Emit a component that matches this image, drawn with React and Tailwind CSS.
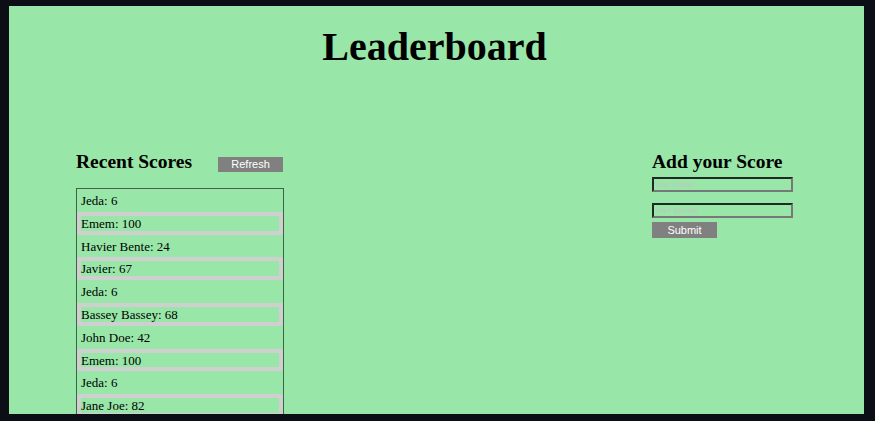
import React from "react";

const scores = [
  { name: "Jeda", score: 6 },
  { name: "Emem", score: 100 },
  { name: "Havier Bente", score: 24 },
  { name: "Javier", score: 67 },
  { name: "Jeda", score: 6 },
  { name: "Bassey Bassey", score: 68 },
  { name: "John Doe", score: 42 },
  { name: "Emem", score: 100 },
  { name: "Jeda", score: 6 },
  { name: "Jane Joe", score: 82 },
];

const serif = "font-['Liberation_Serif','Times_New_Roman',serif]";
const sans = "font-['Liberation_Sans',Arial,sans-serif]";

const App = () => {
  return (
    <div className="min-h-screen bg-[#0b0e14] pt-[6px] pl-[9px]">
      <div className={`w-[855px] h-[408px] overflow-hidden bg-[#98e6a8] text-black ${serif}`}>
        <h1 className="pt-[18px] pr-[4px] text-center text-[40px] leading-[46px] font-bold">Leaderboard</h1>

        <div className="mt-[80px] flex pl-[67px] pr-[71px]">
          <div className="w-[208px]">
            <div className="flex items-start">
              <h2 className="pt-[1px] text-[19.5px] leading-[22px] font-bold">Recent Scores</h2>
              <button className={`ml-[26px] mt-[7px] h-[15px] w-[65px] bg-[#808080] text-[11px] leading-[15px] text-white ${sans}`}>
                Refresh
              </button>
            </div>
            <ul className="mt-[15px] border border-[#3f6347]">
              {scores.map((s, i) => (
                <li
                  key={i}
                  className={`h-[22.8px] border-[4px] text-[13px] leading-[16.5px] ${i % 2 === 1 ? "border-[#cfcfcf]" : "border-transparent"}`}
                >
                  {s.name}: {s.score}
                </li>
              ))}
            </ul>
          </div>

          <div className="ml-auto w-[141px]">
            <h2 className="pt-[1px] text-[19.5px] leading-[22px] font-bold">Add your Score</h2>
            <form className="flex flex-col items-start" onSubmit={(e) => e.preventDefault()}>
              <input
                placeholder="Your Name"
                className={`mt-[4px] h-[15px] w-[141px] border-2 border-t-[#1f2b22] border-l-[#1f2b22] border-r-[#787878] border-b-[#787878] bg-transparent px-[1px] text-[8px] outline-none placeholder:text-[#c4c4c4] ${sans}`}
              />
              <input
                placeholder="Your Scores"
                className={`mt-[11px] h-[15px] w-[141px] border-2 border-t-[#1f2b22] border-l-[#1f2b22] border-r-[#787878] border-b-[#787878] bg-transparent px-[1px] text-[8px] outline-none placeholder:text-[#c4c4c4] ${sans}`}
              />
              <button
                type="submit"
                className={`mt-[4px] h-[16px] w-[65px] bg-[#808080] text-[11px] leading-[16px] text-white ${sans}`}
              >
                Submit
              </button>
            </form>
          </div>
        </div>
      </div>
    </div>
  );
};

export default App;
